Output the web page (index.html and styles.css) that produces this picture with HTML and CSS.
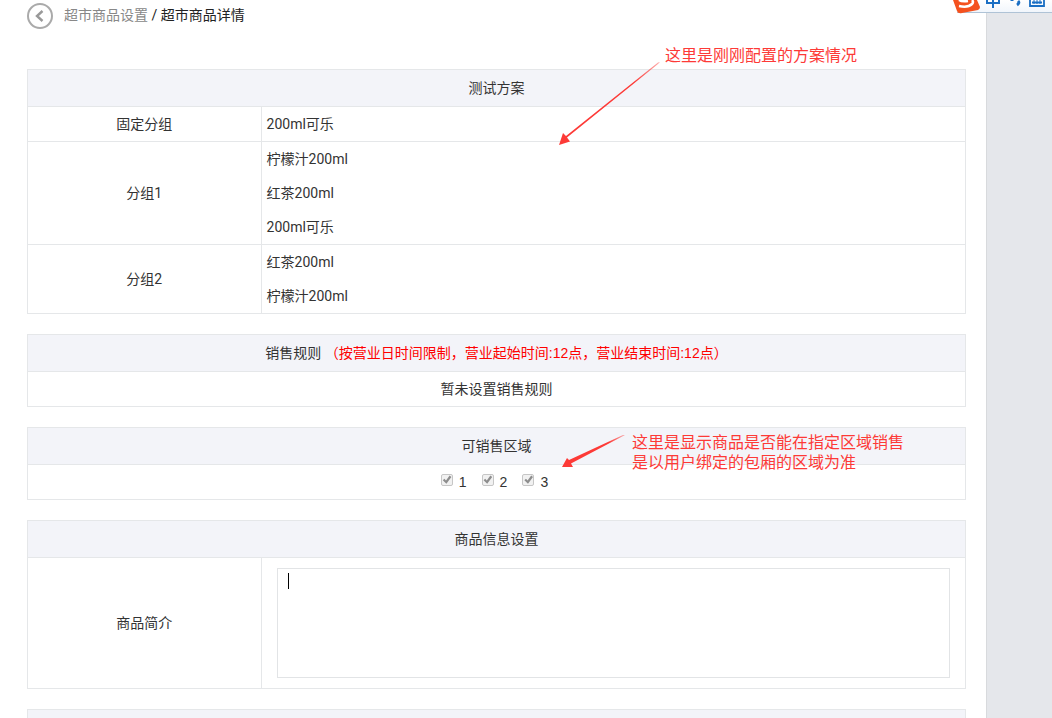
FILE: index.html
```html
<!DOCTYPE html>
<html lang="zh-CN">
<head>
<meta charset="utf-8">
<meta name="viewport" content="width=device-width, initial-scale=1">
<title>超市商品详情</title>
<link rel="stylesheet" href="styles.css">
</head>
<body>
<div class="page">
  <main class="content">
    <nav class="crumbs">
      <button class="back" type="button" aria-label="返回">
        <svg width="26" height="26" viewBox="0 0 26 26" fill="none" stroke="#aaa"><circle cx="13" cy="13" r="12" stroke-width="2"/><path d="M15.500 8 10 13l5.500 5" stroke="#999" stroke-width="2.400"/></svg>
      </button>
      <div><a href="#">超市商品设置</a> / <span>超市商品详情</span></div>
    </nav>
    <div class="sections">
      <table class="grid">
        <colgroup><col class="label-col"><col></colgroup>
        <thead><tr><th colspan="2">测试方案</th></tr></thead>
        <tbody>
          <tr><td class="label">固定分组</td><td class="items">200ml可乐</td></tr>
          <tr><td class="label">分组1</td><td class="items"><ul><li>柠檬汁200ml</li><li>红茶200ml</li><li>200ml可乐</li></ul></td></tr>
          <tr><td class="label">分组2</td><td class="items"><ul><li>红茶200ml</li><li>柠檬汁200ml</li></ul></td></tr>
        </tbody>
      </table>
      <table class="grid">
        <thead><tr><th>销售规则 <span class="limit">（按营业日时间限制，营业起始时间:12点，营业结束时间:12点）</span></th></tr></thead>
        <tbody><tr><td>暂未设置销售规则</td></tr></tbody>
      </table>
      <table class="grid">
        <thead><tr><th>可销售区域</th></tr></thead>
        <tbody><tr><td>
          <div class="areas">
            <label><input type="checkbox" checked disabled>1</label>
            <label><input type="checkbox" checked disabled>2</label>
            <label><input type="checkbox" checked disabled>3</label>
          </div>
        </td></tr></tbody>
      </table>
      <table class="grid">
        <colgroup><col class="label-col"><col></colgroup>
        <thead><tr><th colspan="2">商品信息设置</th></tr></thead>
        <tbody><tr>
          <td class="label"><label for="intro">商品简介</label></td>
          <td class="field"><div class="editor"><textarea id="intro"></textarea><span class="caret"></span></div></td>
        </tr></tbody>
      </table>
      <table class="grid"><thead><tr><th></th></tr></thead></table>

      <p class="note note-plan">这里是刚刚配置的方案情况</p>
      <svg class="arrow arrow-plan" width="104" height="86" viewBox="0 0 104 86">
        <defs><linearGradient id="fade" x1="1" y1="0" x2="0" y2="1"><stop offset="0" stop-color="#fd3a37" stop-opacity=".4"/><stop offset=".25" stop-color="#fd3a37"/></linearGradient></defs>
        <path fill="url(#fade)" d="M103 1 101 3 10 76.500l3 4L2 84l4-12 3 3L101 1.500z"/>
      </svg>
      <p class="note note-area">这里是显示商品是否能在指定区域销售<br>是以用户绑定的包厢的区域为准</p>
      <svg class="arrow arrow-area" width="66" height="36" viewBox="0 0 66 36">
        <path fill="url(#fade)" d="M65 2 11 30.500l2 3.500L2 34l5-9 2 2L63 2z"/>
      </svg>
    </div>
  </main>
  <aside class="rail"></aside>
  <div class="ime">
    <svg width="100" height="14" viewBox="0 0 100 14">
      <defs><linearGradient id="bar" x1="0" y1="0" x2="0" y2="1"><stop offset="0" stop-color="#fff"/><stop offset="1" stop-color="#f1f6fc"/></linearGradient></defs>
      <path fill="url(#bar)" d="M5 0h95v12H5z"/>
      <path stroke="#afc3d6" d="M5 12.500h95"/>
      <path fill="#f4511e" d="M1 0h24l3 7q0 2-2 3L10 13q-4 1-5-2z"/>
      <path fill="none" stroke="#fff" stroke-width="2.500" d="M7 0q3 2 9 1M7 6q9 2 13-2 2-2 0-4"/>
      <g fill="none" stroke="#1b6fc4" stroke-width="2"><path d="M35 0v3h12V0M41 0v8"/><path d="M60 0v1M66 1q2 2-1 4" stroke-width="3"/><path d="M78 0v6h14V0M80 2.500h10" stroke-width="1.800"/><path d="M82 0v4M85 0v4M88 0v4" stroke-width="1"/></g>
    </svg>
  </div>
</div>
</body>
</html>
```
FILE: styles.css
```css
* { box-sizing: border-box; }
body {
  margin: 0;
  color: #333;
  font: 14px/34px Roboto, "Noto Sans CJK SC", sans-serif;
}
.page {
  position: relative;
  display: flex;
  height: 100vh;
  overflow: hidden;
  background: #fff;
}
.content { flex: 1; min-width: 0; padding: 0 20px 0 27px; }
.rail { width: 66px; background: #e5e7eb; border-left: 1px solid #d8dadd; }

.crumbs {
  display: flex;
  align-items: center;
  gap: 11px;
  height: 32px;
  margin-bottom: 37px;
  line-height: 30px;
  color: #222;
}
.crumbs > div { height: 32px; }
.crumbs a { color: #888; text-decoration: none; }
.back { display: flex; padding: 0; border: 0; background: none; cursor: pointer; }

.sections { position: relative; }
.grid {
  width: 100%;
  margin-bottom: 20px;
  border-collapse: collapse;
  table-layout: fixed;
}
.label-col { width: 24.9%; }
.grid th, .grid td { border: 1px solid #e5e7e9; padding: 0; text-align: center; }
.grid th { height: 37px; line-height: 36px; font-weight: 400; background: #f3f4f9; }
.grid .items { padding-left: 5px; text-align: left; }
.items ul { margin: 0; padding: 0; list-style: none; }
.limit { color: #f00; font-family: "Liberation Sans", "Noto Sans CJK SC", sans-serif; }

.areas {
  display: flex;
  justify-content: center;
  gap: 15px;
  padding-right: 4px;
  font-family: "Liberation Sans", sans-serif;
}
.areas label { display: flex; gap: 6px; }
.areas input {
  appearance: none;
  width: 12px;
  height: 12px;
  margin: 9px 0 0;
  border: 1px solid #c6c6c6;
  border-radius: 2px;
  background: #f1f1f1;
}
.areas input::before {
  content: "";
  display: block;
  height: 10px;
  background: #8d8d8d;
  clip-path: polygon(10% 52%, 26% 38%, 42% 56%, 78% 6%, 96% 20%, 46% 88%);
}

.grid .field { padding: 10px 15px; }
.editor { position: relative; display: flex; }
.editor textarea {
  flex: 1;
  height: 110px;
  padding: 4px 10px;
  border: 1px solid #e2e4e6;
  font: inherit;
  line-height: 18px;
  resize: none;
  outline: 0;
}
.caret { position: absolute; left: 11px; top: 5px; width: 1px; height: 16px; background: #000; }

.note {
  position: absolute;
  margin: 0;
  color: #fd3a37;
  font: 16px/20px "Liberation Sans", "Noto Sans CJK SC", sans-serif;
  white-space: nowrap;
}
.arrow { position: absolute; }
.note-plan { left: 638px; top: -23px; }
.arrow-plan { left: 530px; top: -8px; }
.note-area { left: 605px; top: 364px; }
.arrow-area { left: 533px; top: 364px; }

.ime { position: absolute; top: 0; right: 0; }
.ime svg { display: block; }
```
